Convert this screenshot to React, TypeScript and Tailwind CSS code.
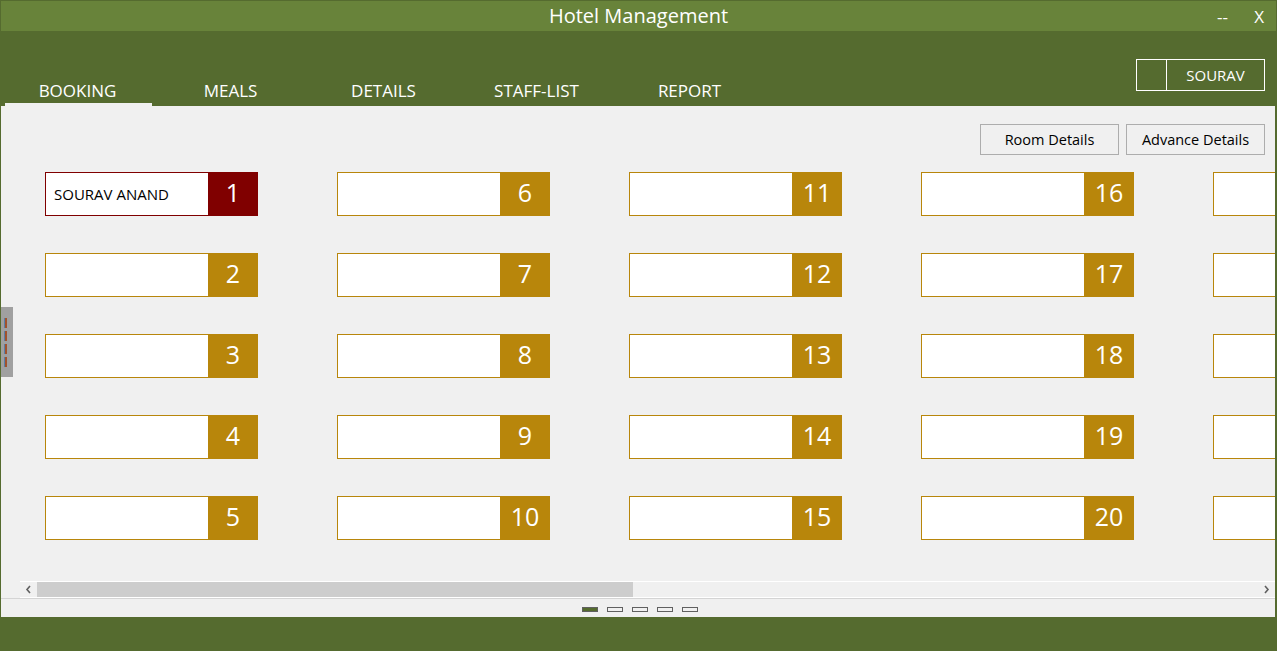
const tabs = ['BOOKING', 'MEALS', 'DETAILS', 'STAFF-LIST', 'REPORT']

const bookings: Record<number, string> = { 1: 'SOURAV ANAND' }

const columns = [0, 1, 2, 3, 4].map(c => [1, 2, 3, 4, 5].map(r => c * 5 + r))

function RoomCard({ num }: { num: number }) {
  const guest = bookings[num]
  const taken = Boolean(guest)
  return (
    <div
      className={[
        'flex w-[213px] h-[44px] shrink-0 border bg-white',
        taken ? 'border-[#800000]' : 'border-[#b8860b]',
      ].join(' ')}
    >
      <div className="flex-1 flex items-center pl-[8px] text-[15px] text-black truncate">{guest}</div>
      <div
        className={[
          'w-[50px] -my-px -mr-px flex items-center justify-center pb-[3px] text-white text-[25px]',
          taken ? 'bg-[#800000]' : 'bg-[#b8860b]',
        ].join(' ')}
      >
        {num}
      </div>
    </div>
  )
}

function Chevron({ dir }: { dir: 'left' | 'right' }) {
  return (
    <svg width="17" height="15" viewBox="0 0 17 15" className="shrink-0">
      <path
        d={dir === 'left' ? 'M10 4 L7 7.5 L10 11' : 'M7 4 L10 7.5 L7 11'}
        fill="none"
        stroke="#606060"
        strokeWidth="1.6"
      />
    </svg>
  )
}

export default function App() {
  return (
    <div
      className="relative w-[1277px] h-[651px] overflow-hidden bg-[#556b2f] flex flex-col"
      style={{ fontFamily: '"Open Sans", "Noto Sans", sans-serif' }}
    >
      {/* Title bar */}
      <div className="mt-px mx-px h-[30px] bg-[#68833a] flex items-center relative text-white">
        <div className="flex-1 text-center text-[20px]">Hotel Management</div>
        <span className="absolute right-[48px] top-[3px] text-[17px]">--</span>
        <span className="absolute right-[12px] top-[3px] text-[17px]">X</span>
      </div>

      {/* Header with tabs */}
      <div className="h-[75px] flex items-end justify-between px-px relative">
        <div className="flex items-end">
          {tabs.map((t, i) => (
            <div key={t} className="w-[153px] flex flex-col items-center">
              <span className="text-white text-[17px] leading-none pb-[4px]">{t}</span>
              <div className={['h-[3px] w-[147px] ml-[2px]', i === 0 ? 'bg-[#f0f0f0]' : ''].join(' ')} />
            </div>
          ))}
        </div>
        <div className="absolute right-[12px] top-[28px] flex h-[32px] border border-white text-white">
          <div className="w-[30px] border-r border-white" />
          <div className="w-[97px] flex items-center justify-center text-[15px]">SOURAV</div>
        </div>
      </div>
      <div className="h-px bg-[#f0f0f0] mx-px mr-[2px]" />

      {/* Content */}
      <div className="relative ml-px mr-[2px] h-[510px] bg-[#f0f0f0] flex flex-col overflow-hidden">
        <div className="flex justify-end gap-[7px] pt-[17px] pr-[10px]">
          <button type="button" className="w-[139px] h-[31px] border border-[#adadad] bg-[#f0f0f0] text-[14.5px] text-black">
            Room Details
          </button>
          <button type="button" className="w-[139px] h-[31px] border border-[#adadad] bg-[#f0f0f0] text-[14.5px] text-black">
            Advance Details
          </button>
        </div>

        <div className="flex gap-[79px] pl-[44px] mt-[17px] h-[368px]">
          {columns.map((col, i) => (
            <div key={i} className="flex flex-col gap-[37px] shrink-0">
              {col.map(n => (
                <RoomCard key={n} num={n} />
              ))}
            </div>
          ))}
        </div>

        {/* Horizontal scrollbar */}
        <div className="mt-[41px] ml-[19px] h-[17px] border-y border-white flex items-center">
          <Chevron dir="left" />
          <div className="w-[596px] h-[15px] bg-[#cdcdcd]" />
          <div className="flex-1" />
          <Chevron dir="right" />
        </div>
        <div className="h-px bg-[#d4d4d4]" />

        {/* Pager */}
        <div className="flex justify-center gap-[9px] mt-[8px] pl-[3px]">
          {[0, 1, 2, 3, 4].map(i => (
            <div
              key={i}
              className={['w-[16px] h-[5px] border border-[#606060]', i === 0 ? 'bg-[#556b2f]' : ''].join(' ')}
            />
          ))}
        </div>

        {/* Side splitter */}
        <div className="absolute left-0 top-[200px] w-[12px] h-[70px] bg-[#a0a0a0] flex flex-col items-start pl-[3px] pt-[11px] gap-[3px]">
          {[0, 1, 2, 3].map(i => (
            <div key={i} className="w-[3px] h-[10px] bg-[#a0522d] border-l border-[#5a7fa8]" />
          ))}
        </div>
      </div>
    </div>
  )
}
